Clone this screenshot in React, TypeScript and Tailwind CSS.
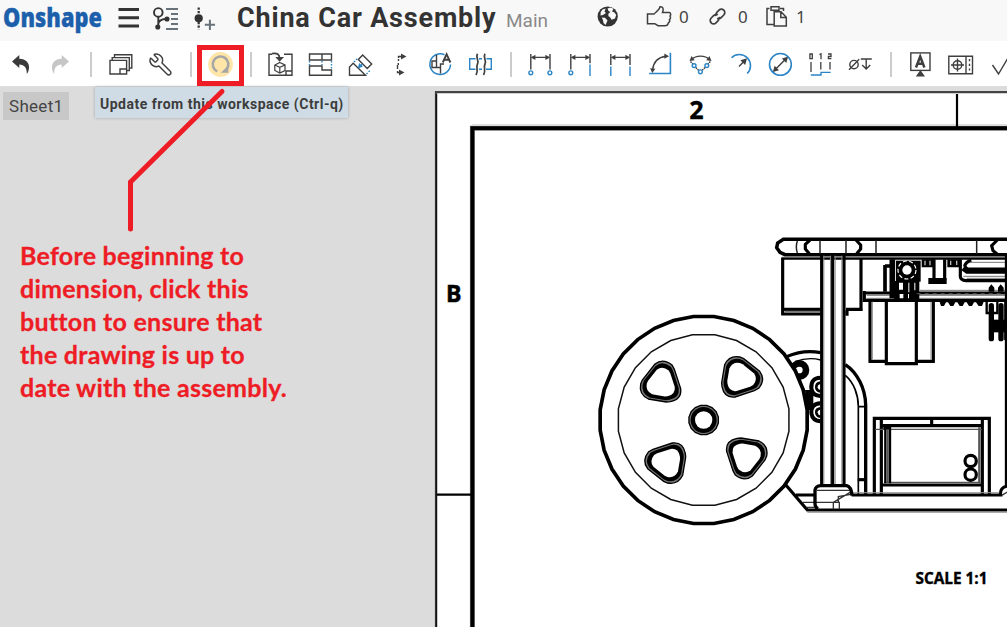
import React from "react";
import { Wrench } from "lucide-react";

const INK = "#3f3f3f";
const BLUE = "#2b84c6";
const RED = "#ee1c25";

function Tool({ children, label }: { children?: React.ReactNode; label: string }) {
  return (
    <button aria-label={label} className="h-[45px] w-10 shrink-0">
      <svg viewBox="0 0 40 45" className="block h-[45px] w-10" fill="none" stroke={INK} strokeWidth="1.4">
        {children}
      </svg>
    </button>
  );
}

function Separator() {
  return (
    <div className="flex h-[45px] w-5 shrink-0 justify-center pt-[11px] pl-[2px]">
      <div className="h-[25px] w-[2px] bg-[#cccccc]" />
    </div>
  );
}

function Arrow({ x, y, r = 0, c = INK, s = 1 }: { x: number; y: number; r?: number; c?: string; s?: number }) {
  return <path d="M0 0L-4.6 -2.6V2.6Z" transform={`translate(${x} ${y}) rotate(${r}) scale(${s})`} fill={c} stroke="none" />;
}

function Toolbar() {
  const back = "M12 20.5L19.3 14V17.8C26 18 29.5 22 29 27C28.8 29.5 28 31.5 26.8 33C27 27 24.5 23.6 19.3 23.6V27Z";
  return (
    <div className="flex h-[45px] w-full shrink-0 overflow-hidden bg-white">
      <Tool label="Undo"><path d={back} fill="#3a3a3a" stroke="none" /></Tool>
      <Tool label="Redo"><path d={back} transform="translate(41 0) scale(-1 1)" fill="#c6c6c6" stroke="none" /></Tool>
      <Separator />
      <Tool label="Sheets">
        <path d="M14.5 16.5V13.8H31.8V27H29.5M12.2 19V16.6H29.3V29.5H27M10 19.4H26.6V33H10ZM20 33V28H26.6" />
      </Tool>
      <button aria-label="Properties" className="flex h-[45px] w-10 shrink-0 items-center justify-center pt-[2px]">
        <Wrench size={25} strokeWidth={1.4} color={INK} className="-scale-x-100" />
      </button>
      <Separator />
      <Tool label="Update">
        <circle cx="20.5" cy="23.5" r="12.4" fill="#ffe5a8" stroke="none" />
        <path d="M17.2 30.3A7.8 7.8 0 1 1 26.6 28.2" stroke="#a6a6a6" strokeWidth="2.6" />
        <path d="M28.3 31.7H20.8L28.3 24.5Z" fill="#a6a6a6" stroke="none" />
      </Tool>
      <Separator />
      <Tool label="Insert view">
        <path d="M12 13.2H9V34.2H32V13.2H24M26 34V30H32" />
        <path d="M19.8 21.5L25 24V29.5L19.8 32L14.8 29.5V24ZM14.8 24L19.8 26.3L25 24M19.8 26.3V32" strokeWidth="1.2" />
        <path d="M12 12.6C17 11.6 19.5 13.5 19.5 17" strokeWidth="1.8" />
        <path d="M15.3 16H24L19.6 20.8Z" fill={INK} stroke="none" />
      </Tool>
      <Tool label="Projected view">
        <path d="M9.5 13H31.5V19H9.5ZM22 13V19M9.5 25H22V29H31.5V34.3H9.5Z" />
        <path d="M9.5 20V24M22 20V24M31.5 20V28" stroke={BLUE} strokeDasharray="1.5 1.5" />
      </Tool>
      <Tool label="Auxiliary view">
        <path d="M9.5 34.3V26L13.2 22.3L25.5 34.3ZM18.3 18.6L22.7 14L31.7 23L27.2 27.6ZM20.6 16.4" />
        <path d="M14 21L18 17M26.5 33L30.5 29" stroke={BLUE} strokeDasharray="1.5 1.5" />
        <path d="M22.5 23L19 26.5" stroke={BLUE} strokeWidth="1.6" /><Arrow x={17.8} y={27.2} r={135} c={BLUE} />
      </Tool>
      <Tool label="Section view">
        <path d="M22 15.5H18.5V20M18.3 22V24M17.5 24V28M17.5 30V31.5H21" strokeDasharray="5 1" />
        <Arrow x={26.5} y={15.5} s={1.2} /><Arrow x={24.5} y={31.5} s={1.2} />
      </Tool>
      <Tool label="Detail view">
        <path d="M24.5 13.8A10.3 10.3 0 1 0 30.5 23.5" stroke={BLUE} strokeWidth="1.5" />
        <path d="M16.5 13.8V20H12V26.5H20.5V32.5M16.5 20V26M20.5 26V23H24" />
        <path d="M22.8 21.5L26.6 13.2L30.4 21.5M24.2 18.8H29" strokeWidth="1.9" />
      </Tool>
      <Tool label="Break view">
        <path d="M15.5 17.7H9.7V28.3H15.5M26.5 17.7H31.3V28.3H26M19 17.7H22M19 28.3H22" stroke={BLUE} />
        <path d="M17.5 12.8C15 17 19.5 19 17.5 23S19 29 16 34M25 12.8C22.500 17 27 19 25 23S26.500 29 23.500 34" strokeWidth="1.7" />
      </Tool>
      <Separator />
      <Tool label="Point to point dimension">
        <path d="M10.8 13V28.5M30 13V28.5M12 16.4H29" /><Arrow x={30} y={16.4} /><Arrow x={10.8} y={16.4} r={180} />
        <g stroke={BLUE}><circle cx="10.8" cy="31.8" r="1.9" /><circle cx="29.9" cy="31.8" r="1.9" /></g>
      </Tool>
      <Tool label="Point to line dimension">
        <path d="M10.8 13V28.5M30 13V22.3M12 16.4H29" /><Arrow x={30} y={16.4} /><Arrow x={10.8} y={16.4} r={180} />
        <circle cx="10.8" cy="31.8" r="1.9" stroke={BLUE} /><path d="M30 23.5V35" stroke={BLUE} />
      </Tool>
      <Tool label="Line to line dimension">
        <path d="M10.8 13V24M30 13V24M12 16.4H29" /><Arrow x={30} y={16.4} /><Arrow x={10.8} y={16.4} r={180} />
        <path d="M10.8 25.5V35M30 25.5V35" stroke={BLUE} />
      </Tool>
      <Tool label="Angle dimension">
        <path d="M30.4 11.8V32.5H9.2" stroke={BLUE} strokeWidth="1.6" />
        <path d="M12.5 29C13.5 20.5 19 16 26 15.2" /><Arrow x={29} y={15.2} /><Arrow x={12.3} y={32} r={95} />
      </Tool>
      <Tool label="Three point angle dimension">
        <path d="M11.5 18.5C16 14 25 14 29.5 18.5" /><Arrow x={31.5} y={20} r={38} /><Arrow x={9.5} y={20} r={142} />
        <path d="M10.5 20.5L13 23M30.3 20.5L28 23M15.8 26.5L18.8 29.5M25 26.5L22 29.5" strokeDasharray="1.6 .8" />
        <g stroke={BLUE}><circle cx="14.1" cy="24.6" r="1.9" /><circle cx="26.8" cy="24.6" r="1.9" /><circle cx="20.4" cy="30.8" r="1.9" /></g>
      </Tool>
      <Tool label="Radial dimension">
        <path d="M11.5 16.7A11 11 0 0 1 27.2 32.5" stroke={BLUE} strokeWidth="1.6" />
        <path d="M19 25.5L25 19.3" /><Arrow x={27} y={17.3} r={-45} s={1.3} />
      </Tool>
      <Tool label="Diameter dimension">
        <circle cx="20.4" cy="23.4" r="10.9" stroke={BLUE} strokeWidth="1.6" />
        <path d="M14 29.8L27 16.8" /><Arrow x={28} y={15.8} r={-45} s={1.2} /><Arrow x={12.9} y={30.9} r={135} s={1.2} />
      </Tool>
      <Tool label="Ordinate dimension">
        <path d="M11 21V31M20.8 21V28.5M30 21V28.5M9.9 13H12.3V17.7H9.9ZM19.5 13.6L21 12.8V18.2M28 13H31V15.5H28.4V17.7H31.4" strokeWidth="1.3" />
        <path d="M10.8 34H21V31.4H30.6" stroke={BLUE} />
      </Tool>
      <Tool label="Hole callout">
        <circle cx="14" cy="23.6" r="4.2" /><path d="M9 28.8L19.2 18.3M20.8 18H31.8M26.2 18V28M22.2 24L26.2 28L30.2 24" />
      </Tool>
      <Separator />
      <Tool label="Note">
        <rect x="10.8" y="11.9" width="19.2" height="17.5" />
        <path d="M16 26.5L20.2 15.5L24.4 26.5M17.3 22.8H23.2" strokeWidth="2.5" />
        <path d="M20.4 29L25 35.5H15.8Z" fill={INK} stroke="none" />
      </Tool>
      <Tool label="Geometric tolerance">
        <path d="M8.8 15.3H32.5V32.7H8.8ZM26 15.3V32.7M11 24H24M17.5 17.5V30.5" />
        <circle cx="17.5" cy="24" r="4.3" /><path d="M29.5 18V31" strokeDasharray="2.2 2.5" />
      </Tool>
      <Tool label="Surface finish"><path d="M12.5 24L18.5 33L28 17" /></Tool>
    </div>
  );
}

function Header() {
  return (
    <header className="flex h-[41px] w-full shrink-0 overflow-hidden bg-[#f8f8f8]">
      <svg viewBox="0 0 230 41" className="h-[41px] w-[230px] shrink-0">
        <text x="3" y="26.500" textLength="99" lengthAdjust="spacingAndGlyphs" fontSize="26" fontWeight="800" fill="#1c5fab" stroke="#1c5fab" strokeWidth=".3" fontFamily="'Open Sans', sans-serif">Onshape</text>
        <path d="M118.5 9.5H139M118.5 17.8H139M118.5 26H139" stroke="#333" strokeWidth="3" />
        <g fill="none" stroke="#333" strokeWidth="1.9">
          <circle cx="158.3" cy="12.4" r="4.3" />
          <path d="M158.3 17V26M158.3 24C158.5 20.5 161 19.2 166 19" />
          <circle cx="157.8" cy="27" r="1.6" fill="#333" /><circle cx="167" cy="19" r="1.6" fill="#333" />
        </g>
        <path d="M166 9H178M171 14H178M171 19H178M171 24H178M166 29H178" stroke="#68727b" strokeWidth="1.9" />
        <circle cx="198.7" cy="18.3" r="4.1" fill="#333" />
        <path d="M198.7 7.5V14M198.7 22V29.5" stroke="#333" strokeWidth="2.2" strokeDasharray="2.2 1.4" />
        <path d="M204.8 24.8H215M209.9 19.7V30" stroke="#68727b" strokeWidth="2" />
      </svg>
      <h1 className="w-[276px] shrink-0 pt-[2px] pl-[7px] font-['Roboto',sans-serif] text-[27px] leading-[33px] font-bold tracking-[0.82px] whitespace-nowrap text-[#333]">China Car Assembly</h1>
      <span className="w-[90px] shrink-0 pt-[9px] font-['Roboto',sans-serif] text-[19px] leading-[23px] text-[#8a8a8a]">Main</span>
      <svg viewBox="0 0 22 41" className="h-[41px] w-[22px] shrink-0">
        <circle cx="11.700" cy="16.500" r="10.100" fill="#333" />
        <path d="M11.500 8.500L14.500 7.500L17.500 8.700L16 11.500L18.500 12.500L20.200 15L19 18.500L15.500 19.800L14.300 17.500L12.300 16L12.500 13.500L14.500 12L12.500 11Z" fill="#f8f8f8" />
        <path d="M4.700 12L6.500 9.500L9.700 8.500L8.500 11.500L10 13L7 15L4.500 15.500ZM5.800 17.500L9 17.800L11.500 20.500L9.500 25L7.500 23L7 20.200Z" fill="#f8f8f8" />
      </svg>
      <div className="flex shrink-0 font-['Noto_Sans',sans-serif] text-[17px] leading-[34px] text-[#444]">
        <svg viewBox="0 0 60 41" className="h-[41px] w-[60px]" fill="none" stroke={INK} strokeWidth="1.5">
          <path d="M29.5 14H36C38 12 41.5 10 42 6.7C45 6.3 46 8.5 44.5 12.5H51.3C53 13 53 15 52 16C53 17.5 52.4 19 51.5 19.5C52 21 51.2 22.4 50.4 22.8C50 24.8 49 25.7 47 25.7H40L36.8 23.7H29.5Z" />
        </svg>
        <span className="w-[22px] pl-px">0</span>
        <svg viewBox="0 0 38 41" className="h-[41px] w-[38px]" fill="none" stroke={INK} strokeWidth="1.7">
          <g transform="translate(17.5 16.5) rotate(-45)">
            <path d="M1.5 -1C1 -3 -1 -3.4 -2.5 -3.4H-5.5A3.4 3.4 0 0 0 -5.5 3.4H-2.5Q0 3.2 1 1.5M-1.5 1C-1 3 1 3.4 2.5 3.4H5.5A3.4 3.4 0 0 0 5.5 -3.4H2.5Q0 -3.2 -1 -1.5" />
          </g>
        </svg>
        <span className="w-[20px]">0</span>
        <svg viewBox="0 0 38 41" className="h-[41px] w-[38px]" fill="none" stroke={INK} strokeWidth="1.5">
          <path d="M11.5 8.5H9V24.5H15.5M22 8.5H25.5V11M13 6.8H21V10.2H13ZM16.2 11.8H23L28.3 17.2V26H16.2ZM22.8 12V17.5H28" />
        </svg>
        <span>1</span>
      </div>
    </header>
  );
}

function ring(cx: number, cy: number, r: number, n: number) {
  return Array.from({ length: n }, (_, i) => {
    const a = ((i + 0.5) / n) * Math.PI * 2;
    return `${(cx + r * Math.cos(a)).toFixed(1)},${(cy + r * Math.sin(a)).toFixed(1)}`;
  }).join(" ");
}

function Wheel() {
  const hole = "M-18 -58Q6 -77 33 -55L40 -42L59 16Q63 48 28 55L16 56L-38 47Q-67 33 -61 2L-56 -10Z";
  return (
    <g transform="translate(580 300) scale(.333333)">
      <polygon points={ring(371, 360, 312, 32)} fill="#fff" stroke="#000" strokeWidth="11" />
      <polygon points={ring(371, 360, 258, 24)} fill="none" stroke="#111" strokeWidth="4.500" />
      <polygon points={ring(371, 360, 45, 16)} fill="#777" stroke="#000" strokeWidth="4" />
      <circle cx="371" cy="360" r="39" />
      <circle cx="371" cy="360" r="26" fill="#fff" />
      {[0, 90, 180, 270].map((a) => (
        <g key={a} transform={`rotate(${a} 371 360) translate(243 250)`}>
          <path d={hole} fill="#777" stroke="#000" strokeWidth="4" />
          <path d={hole} transform="scale(.9)" />
          <path d={hole} transform="scale(.7)" fill="#fff" />
        </g>
      ))}
    </g>
  );
}

function Chassis() {
  return (
    <>
      <g transform="translate(770 225) scale(.333333)" fill="none" stroke="#000" strokeWidth="9.5">
        <path d="M714 43H40L23 54L20 68L30 82L45 89H714" strokeWidth="10.5" />
        <path d="M120 45L106 58V72L118 86M258 45L272 60V72L260 86M682 45L665 62L669 77L682 88" />
        <path d="M82 48Q76 66 82 84M150 46V86M228 46V86M318 46V86M620 46V86" strokeWidth="4.500" stroke="#222" />
        <path d="M35 97H714" stroke="#777" strokeWidth="4" /><path d="M35 101H714" strokeWidth="6" />
        <path d="M38 98V271M38 253H152M34 267H152M228 253H278M273 100V256M231 255V272" />
        <path d="M44 260H152" stroke="#777" strokeWidth="6" />
        <path d="M155 92V782M188 92V782M222 92V782" />
        <path d="M161.500 92V782M181.500 92V782M195.500 92V782M215.500 92V782" stroke="#888" strokeWidth="3" />
        <path d="M283 198V230M278 204H714M278 226H714" />
        <path d="M290 211H714M290 220H714M450 196H714" stroke="#777" strokeWidth="3" />
        <path d="M300 230V413M490 230V413M296 409H350M438 409H494M349 230V416H439V230" />
        <path d="M307 230V404M483 230V404" stroke="#888" strokeWidth="3" />
        <path d="M345 120V200M345 123H362" strokeWidth="11" />
        <path d="M367 103V220" strokeWidth="17" />
        <path d="M378 107H452V170H378Z" fill="#000" stroke="none" />
        <circle cx="411" cy="135" r="27" stroke="#fff" strokeWidth="3.500" strokeDasharray="12 7" />
        <circle cx="411" cy="135" r="14" fill="#fff" stroke="none" />
        <path d="M372 168H448V230H372Z" fill="#000" stroke="none" />
        <path d="M387 173H399V194H387ZM415 173H418V202H415ZM433 173H436V196H433ZM389 207H400V220H389ZM414 207H417V220H414Z" fill="#fff" stroke="none" />
        <path d="M455 103H492V127H455ZM532 103H572V127H532Z" fill="#000" stroke="none" />
        <path d="M465 107V121M480 107V121M542 107V120M560 107V120" stroke="#bbb" strokeWidth="4" />
        <path d="M492 103V160M524 103V165" />
        <path d="M475 168H530" strokeWidth="18" />
        <path d="M571 103V155Q572 166 588 167H714" />
        <path d="M714 137H592L580 128" strokeWidth="19" />
        <path d="M584 125Q586 110 604 106" />
        <path d="M600 112H714M580 154H714M590 160H714" stroke="#777" strokeWidth="3" />
        <path d="M508 228L513 243H522L528 232H534L541 243H550L556 232H562L569 243H578L584 232H590L597 243H606L612 232H618L626 243H636L642 228Z" fill="#000" stroke="none" />
        <path d="M656 200V188L664 178L673 188V200ZM684 200V188L692 178L701 188V200Z" fill="#000" stroke="none" />
        <path d="M440 206H714" stroke="#555" strokeWidth="3" strokeDasharray="12 12" />
        <path d="M650 230V264H682V230M706 230V345" strokeWidth="7" />
        <path d="M664 242V341M693 242V341" strokeWidth="16" strokeLinecap="round" />
        <path d="M660 303H710" strokeWidth="38" />
        <path d="M709 92V782" strokeWidth="9" />
      </g>
      <g transform="translate(770 340) scale(.333333)" fill="none" stroke="#000" strokeWidth="9.5">
        <path d="M50 50Q100 28 152 38" /><path d="M75 65Q115 50 152 60" strokeWidth="4" />
        <circle cx="88" cy="90" r="20" strokeWidth="20" /><path d="M70 92Q82 80 92 94" stroke="#fff" strokeWidth="3" />
        <path d="M105 150H130V210H112Z" fill="#000" stroke="none" />
        <path d="M151 113Q122 114 124 145Q128 167 151 168M151 190Q122 192 124 220Q128 242 151 244" strokeWidth="12" />
        <path d="M151 128Q138 130 139 143Q141 153 151 154M151 205Q138 207 139 218Q141 229 151 230" strokeWidth="8" />
        <path d="M226 74C262 98 286 145 287 195V463" strokeWidth="10" />
        <path d="M226 106C252 128 265 165 265 200V463M265 200H285" strokeWidth="5" />
        <path d="M263 419H290" />
        <path d="M313 465V235H658V465M334 237V465M637 237V465M334 257H637M485 238V257M334 435H637" />
        <path d="M315 268H635M342 427H632" strokeWidth="4" stroke="#555" />
        <path d="M346 260V430M360 260V430" strokeWidth="7" /><path d="M353 264V430M628 262V430" stroke="#555" strokeWidth="7" />
        <path d="M340 262H363" strokeWidth="12" />
        <circle cx="602" cy="363" r="17" /><circle cx="602" cy="404" r="17" />
        <path d="M47 434L112 510H714M78 465H135M245 465H692Q688 442 714 438" />
        <path d="M98 487H190M110 502H134M140 451H240M190 508V487L240 457M208 508V487H190M205 487V470L242 463M695 466L714 455" strokeWidth="4" stroke="#333" />
        <path d="M112 517H714M245 458H688" strokeWidth="3" stroke="#999" />
        <path d="M145 506Q135 504 135 490V450Q137 438 152 437H230Q244 440 246 467" strokeWidth="10" />
      </g>
    </>
  );
}

function DrawingSheet() {
  return (
    <svg viewBox="434 86 573 541" className="block h-[541px] w-[573px] shrink-0">
      <rect x="436" y="93" width="580" height="540" fill="#fff" />
      <path d="M1007 92.2H436V627" fill="none" stroke="#444" strokeWidth="2.200" />
      <path d="M436.400 94V627" stroke="#111" strokeWidth="1.500" />
      <path d="M472 124.500H1007" stroke="#ddd" />
      <path d="M1007 128.200H472.400V627" fill="none" stroke="#777" strokeWidth="5" />
      <path d="M1007 128.200H472.400V627" fill="none" stroke="#000" strokeWidth="3.800" />
      <path d="M957 94V127M437 494.700H471" stroke="#000" strokeWidth="2.200" />
      <g fontFamily="'Open Sans', sans-serif" fontWeight="700" fill="#000" stroke="#000">
        <text x="689.500" y="119" fontSize="25" strokeWidth=".5" textLength="14" lengthAdjust="spacingAndGlyphs">2</text>
        <text x="446" y="302" fontSize="22.500" strokeWidth=".5" textLength="15.500" lengthAdjust="spacingAndGlyphs">B</text>
        <text x="915.500" y="583.500" fontSize="16" strokeWidth=".4" textLength="72" lengthAdjust="spacingAndGlyphs">SCALE 1:1</text>
      </g>
      <Chassis />
      <Wheel />
    </svg>
  );
}

const NOTE = ["Before beginning to", "dimension, click this", "button to ensure that", "the drawing is up to", "date with the assembly."];

export default function App() {
  return (
    <div className="relative flex h-[627px] w-[1007px] flex-col overflow-hidden bg-[#dcdcdc]">
      <Header />
      <Toolbar />
      <main className="flex h-[541px]">
        <section className="flex w-[434px] shrink-0 flex-col">
          <div className="flex h-[153px] shrink-0">
            <div className="mt-[6px] ml-[3px] h-[28px] w-[66px] shrink-0 bg-[#c8c8c8] pl-[6px] font-['Roboto',sans-serif] text-[17px] leading-[29px] tracking-[0.3px] text-[#444]">Sheet1</div>
            <div className="mt-[1px] ml-[26px] h-[31px] w-[253px] shrink-0 bg-[#d0dce5] pl-[5px] font-['Roboto',sans-serif] text-[14px] leading-[34px] font-bold tracking-[0.5px] whitespace-nowrap text-[#3c3c3c] shadow-[0_0_3px_rgba(0,0,0,0.25)]">Update from this workspace (Ctrl-q)</div>
          </div>
          <div className="pl-5 font-['Lato',sans-serif] text-[25px] leading-[33px] font-bold tracking-[0.25px] whitespace-nowrap text-[#ee1c25] [-webkit-text-stroke:0.3px_#ee1c25]">
            {NOTE.map((line) => <p key={line}>{line}</p>)}
          </div>
        </section>
        <DrawingSheet />
      </main>
      <svg viewBox="0 0 300 240" className="pointer-events-none absolute top-0 left-0 h-[240px] w-[300px]" fill="none" stroke={RED} strokeWidth="5">
        <rect x="199.500" y="47.500" width="42" height="36" />
        <path d="M222 91.500L130.500 182V229" strokeLinecap="round" />
      </svg>
    </div>
  );
}
